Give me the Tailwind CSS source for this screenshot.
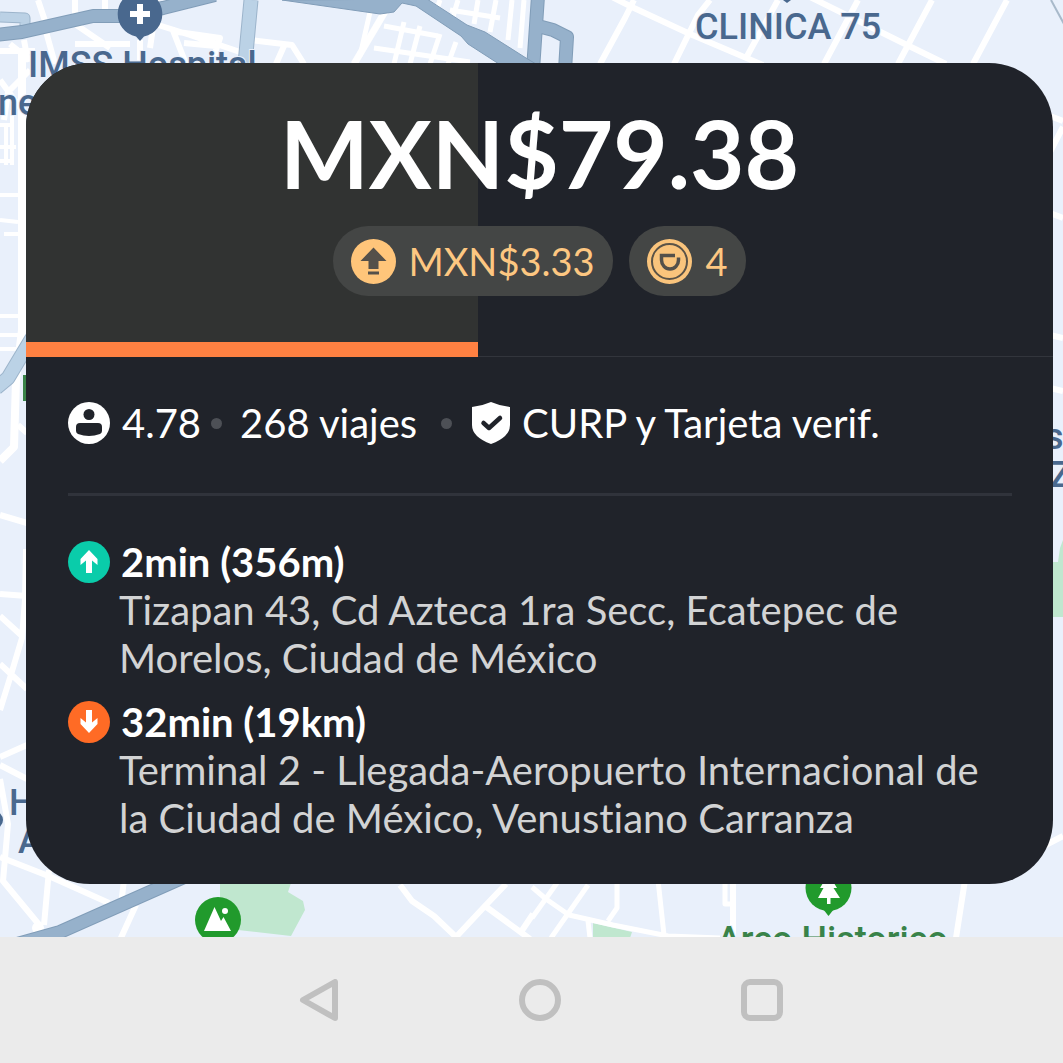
<!DOCTYPE html>
<html lang="es">
<head>
<meta charset="utf-8">
<meta name="viewport" content="width=device-width, initial-scale=1">
<title>Oferta de viaje</title>
<script src="https://cdn.jsdelivr.net/npm/@tailwindcss/browser@4"></script>
</head>
<body class="flex min-h-screen flex-col bg-[#ebebeb] font-['Lato',sans-serif] [font-variant-ligatures:none]">
<main class="relative flex flex-1 flex-col overflow-hidden bg-[#e9f0fb] pt-[63px] pr-[10px] pb-[53px] pl-[26px]">
  <!-- Map -->
  <svg class="absolute inset-0 h-full w-full" viewBox="0 0 1063 937" preserveAspectRatio="xMidYMin slice" aria-hidden="true">
    <g fill="#c0e7cf">
      <path d="M220 880H292L288 892L303 901L305 910L291 936L220 928Z"/>
      <path d="M593 923L632 932L630 938H593Z"/>
      <path d="M1053 562H1058L1060 548L1063 540V617H1050Z"/>
    </g>
    <g fill="none" stroke="#fff" stroke-width="6" stroke-linejoin="round">
      <path d="M22 50V330L16 380L14 447L0 461" stroke-width="8"/>
      <path d="M0 51H35M10 44L30 60M24 40L28 62M0 80L22 110M30 70L8 92L4 120M45 28L55 64M75 0V24L110 48M38 0L46 24M105 0V12M75 44H130M140 40V64M157 0L150 48M155 24L190 35L240 52M172 28L186 64M178 32L220 38L212 62M184 43L216 46M250 40L292 45L304 64M284 46L276 64M190 0L186 8"/>
      <path d="M386 10L354 64" stroke-width="7"/>
      <path d="M370 12L360 56M374 48L470 62M384 26L438 36M404 22L394 64M420 26L410 64M440 34L430 64M456 42L448 64M440 0L436 12M458 0L452 20M478 0L474 24M496 0L490 32M512 0L508 40M524 0L520 48M450 10L500 18" stroke-width="5"/>
      <path d="M612 -3L634 8L690 34L763 65M634 0L625 18L600 64M710 0L698 15L674 64M778 0L746 58M806 -5L909 46L946 64M858 0L824 64M932 0L898 64M1007 0L973 64"/>
      <path d="M0 125H14M0 147H16M6 125V165M0 161H14M12 110V165M0 195H24M0 220L18 222M4 234H26M0 316H22M0 335H22M0 349H20" stroke-width="4"/>
      <path d="M18 425L27 433M0 515L27 523M26 549L25 600L22 638L10 678L0 710M0 594L27 596M0 616L22 636M0 664L27 689M0 757L27 745M0 765L27 779M0 779L8 824L3 881L41 927"/>
      <path d="M0 857L51 877L109 903M49 870L44 925M124 880L121 905M136 905L130 918L120 940M400 885L412 901L434 916L456 937L485 906L506 884M485 906L530 939M521 932L533 914"/>
      <path d="M532 887L546 899L569 915L613 925L668 936L720 938M557 883L532 918M588 885L551 938M617 880V908L608 921M588 921L590 938M658 880L664 935M725 880V904H733" stroke-width="5"/>
      <path d="M733 880V938M965 880L956 938M1050 116L1063 121M1063 127L1050 152M1050 213L1063 218M1050 335L1063 338M1050 388L1063 391M1040 848L1063 836"/>
    </g>
    <circle cx="38" cy="928" r="6" fill="#fff"/>
    <g fill="none" stroke-linejoin="round">
      <path d="M0 17L25 18V28" stroke="#9cb4cb" stroke-width="11"/>
      <path d="M0 17L25 18V28" stroke="#bbd1e5" stroke-width="9"/>
      <path d="M251 0L245 64M32 338L8 378L-4 388" stroke="#9cb4cb" stroke-width="15"/>
      <path d="M251 0L245 64M32 338L8 378L-4 388" stroke="#bbd2e6" stroke-width="13"/>
      <path d="M-4 35L22 32L93 16H120L163 8L215 -5M184 877L60 932L10 946M538 -4L533 70M538 26L553 30L567 37L565 70" stroke="#819db8" stroke-width="14"/>
      <path d="M-4 35L22 32L93 16H120L163 8L215 -5M184 877L60 932L10 946M538 -4L533 70M538 26L553 30L567 37L565 70" stroke="#96b1cb" stroke-width="12"/>
      <path d="M1051 0L1064 24" stroke="#a8b9ca" stroke-width="2"/>
    </g>
    <path d="M282 0L380 14L394 12L402 3L416 6L461 36L468 44L499 64H536L526 58L485 32L467 25L427 -1Z" fill="#96b1cb" stroke="#819db8"/>
    <rect x="23" y="375" width="10" height="26" fill="#398349"/>
    <g fill="#49688e">
      <path d="M140 -9A23 23 0 0 1 144 36.500L140 41L136 36.500A23 23 0 0 1 140 -9Z"/>
      <circle cx="-6" cy="820" r="9"/>
      <path d="M783 0H791L787 3Z"/>
    </g>
    <path d="M140 4V24M130 14H150" stroke="#fff" stroke-width="6"/>
    <g font-family="Roboto, sans-serif" font-size="36" font-weight="500" fill="#49688e" stroke="#e9f0fb" stroke-width="2" paint-order="stroke">
      <text x="28" y="77">IMSS Hospital</text>
      <text x="-2" y="115">ne</text>
      <text x="695" y="39">CLINICA 75</text>
      <text x="9" y="815">H</text>
      <text x="18" y="853">A</text>
      <text x="1045" y="449">s</text>
      <text x="1050" y="487">Z</text>
      <text x="717" y="952" fill="#398349">Arco Historico</text>
    </g>
    <circle cx="218" cy="920" r="23" fill="#219a2c"/>
    <path d="M204 931L214.500 907L221 921L223.500 917L231 931Z" fill="#fff"/>
    <circle cx="225" cy="911" r="3" fill="#fff"/>
    <circle cx="828.500" cy="888" r="23" fill="#219a2c"/>
    <path d="M823 909H834L828.500 916Z" fill="#219a2c"/>
    <path d="M828.500 874L837 888H833.500L840 898H830.500V904H827V898H818L823.500 888H820Z" fill="#fff"/>
  </svg>

  <article class="relative flex flex-1 flex-col overflow-hidden rounded-[64px] bg-[#20232a] text-white">
    <header class="relative flex h-[294px] flex-col items-center border-b border-[#32353c]">
      <div class="absolute top-0 -bottom-px left-0 w-[44%] border-b-[15px] border-[#ff8142] bg-[#313332]" role="progressbar" aria-label="Tiempo para aceptar" aria-valuenow="44"></div>
      <h1 class="relative mt-[38px] text-[94px] leading-[104px] font-bold">MXN$79.38</h1>
      <div class="relative mt-[21px] flex gap-4 text-[38px] text-[#fdc781]">
        <div class="flex h-[70px] items-center gap-3 rounded-full bg-[#444645] px-[18px]">
          <svg class="size-[45px]" viewBox="0 0 45 45" aria-hidden="true"><circle cx="22.500" cy="22.500" r="22.500" fill="#ffc57a"/><path d="M22.500 8.500L35.500 22H27.500V30H17.500V22H9.500ZM17 32.500H28V35.500H17Z" fill="#54504a"/></svg>
          <span>MXN$3.33</span>
        </div>
        <div class="flex h-[70px] items-center gap-[14px] rounded-full bg-[#444645] px-[18px]">
          <svg class="size-[45px]" viewBox="0 0 45 45" aria-hidden="true"><circle cx="22.500" cy="22.500" r="22.500" fill="#fac47c"/><circle cx="22.500" cy="22.500" r="17.500" fill="none" stroke="#5b5347" stroke-width="2"/><path d="M28 16.500H14.500V21A8.500 9 0 0 0 31.500 21V18.500" fill="none" stroke="#54504a" stroke-width="3.500"/></svg>
          <span>4</span>
        </div>
      </div>
    </header>

    <section class="mr-[41px] ml-[42px] flex h-[139px] items-center border-b-[3px] border-[#30333b] pb-1 text-[40px]">
      <svg class="size-[42px]" viewBox="0 0 42 42" aria-hidden="true"><circle cx="21" cy="21" r="21" fill="#fff"/><circle cx="21" cy="12.500" r="5.500" fill="#20232a"/><path d="M12 21H30Q34 21 34 25V29Q34 31 32 32Q21 36 10 32Q8 31 8 29V25Q8 21 12 21Z" fill="#20232a"/></svg>
      <span class="ml-3">4.78</span>
      <span class="ml-[10px] size-[11px] rounded-full bg-[#4d5056]"></span>
      <span class="ml-[18px]">268 viajes</span>
      <span class="ml-6 size-[11px] rounded-full bg-[#4d5056]"></span>
      <svg class="ml-5 h-[42px] w-[38px]" viewBox="0 0 38 42" aria-hidden="true"><path d="M19 0Q28 4 38 5V23Q38 35 19 42Q0 35 0 23V5Q10 4 19 0Z" fill="#fff"/><path d="M11.500 21L17 26L28 16" fill="none" stroke="#20232a" stroke-width="4.500" stroke-linecap="round" stroke-linejoin="round"/></svg>
      <span class="ml-3">CURP y Tarjeta verif.</span>
    </section>

    <ol class="mt-[42px] mr-9 ml-[42px] flex flex-col gap-4 text-[40px] leading-[48px]">
      <li>
        <h2 class="flex items-center gap-[11px] font-bold">
          <svg class="size-[42px]" viewBox="0 0 42 42" aria-hidden="true"><circle cx="21" cy="21" r="21" fill="#0accaa"/><path d="M21 9L29.500 18V24L24 19.500V32H18V19.500L12.500 24V18Z" fill="#fff"/></svg>
          <span>2min (356m)</span>
        </h2>
        <p class="ml-[51px] text-[#d2d3d4]">Tizapan 43, Cd Azteca 1ra Secc, Ecatepec de Morelos, Ciudad de México</p>
      </li>
      <li>
        <h2 class="flex items-center gap-[11px] font-bold">
          <svg class="size-[42px]" viewBox="0 0 42 42" aria-hidden="true"><circle cx="21" cy="21" r="21" fill="#ff6b25"/><path d="M21 32L29.500 23V17L24 21.500V9H18V21.500L12.500 17V23Z" fill="#fff"/></svg>
          <span>32min (19km)</span>
        </h2>
        <p class="ml-[51px] text-[#d2d3d4]">Terminal 2 - Llegada-Aeropuerto Internacional de la Ciudad de México, Venustiano Carranza</p>
      </li>
    </ol>
  </article>
</main>

<nav class="flex h-[126px] items-center justify-center gap-[180px] pl-4" aria-label="Sistema">
  <button type="button" aria-label="Atrás"><svg class="size-[42px]" viewBox="0 0 42 42" fill="none" stroke="#c0c0c0" stroke-width="6" stroke-linejoin="round"><path d="M38 3V39L6 21Z"/></svg></button>
  <button type="button" aria-label="Inicio"><svg class="size-[42px]" viewBox="0 0 42 42" fill="none" stroke="#c0c0c0" stroke-width="6"><circle cx="21" cy="21" r="18"/></svg></button>
  <button type="button" aria-label="Recientes"><svg class="size-[42px]" viewBox="0 0 42 42" fill="none" stroke="#c0c0c0" stroke-width="6"><rect x="3" y="3" width="36" height="36" rx="6"/></svg></button>
</nav>
</body>
</html>
